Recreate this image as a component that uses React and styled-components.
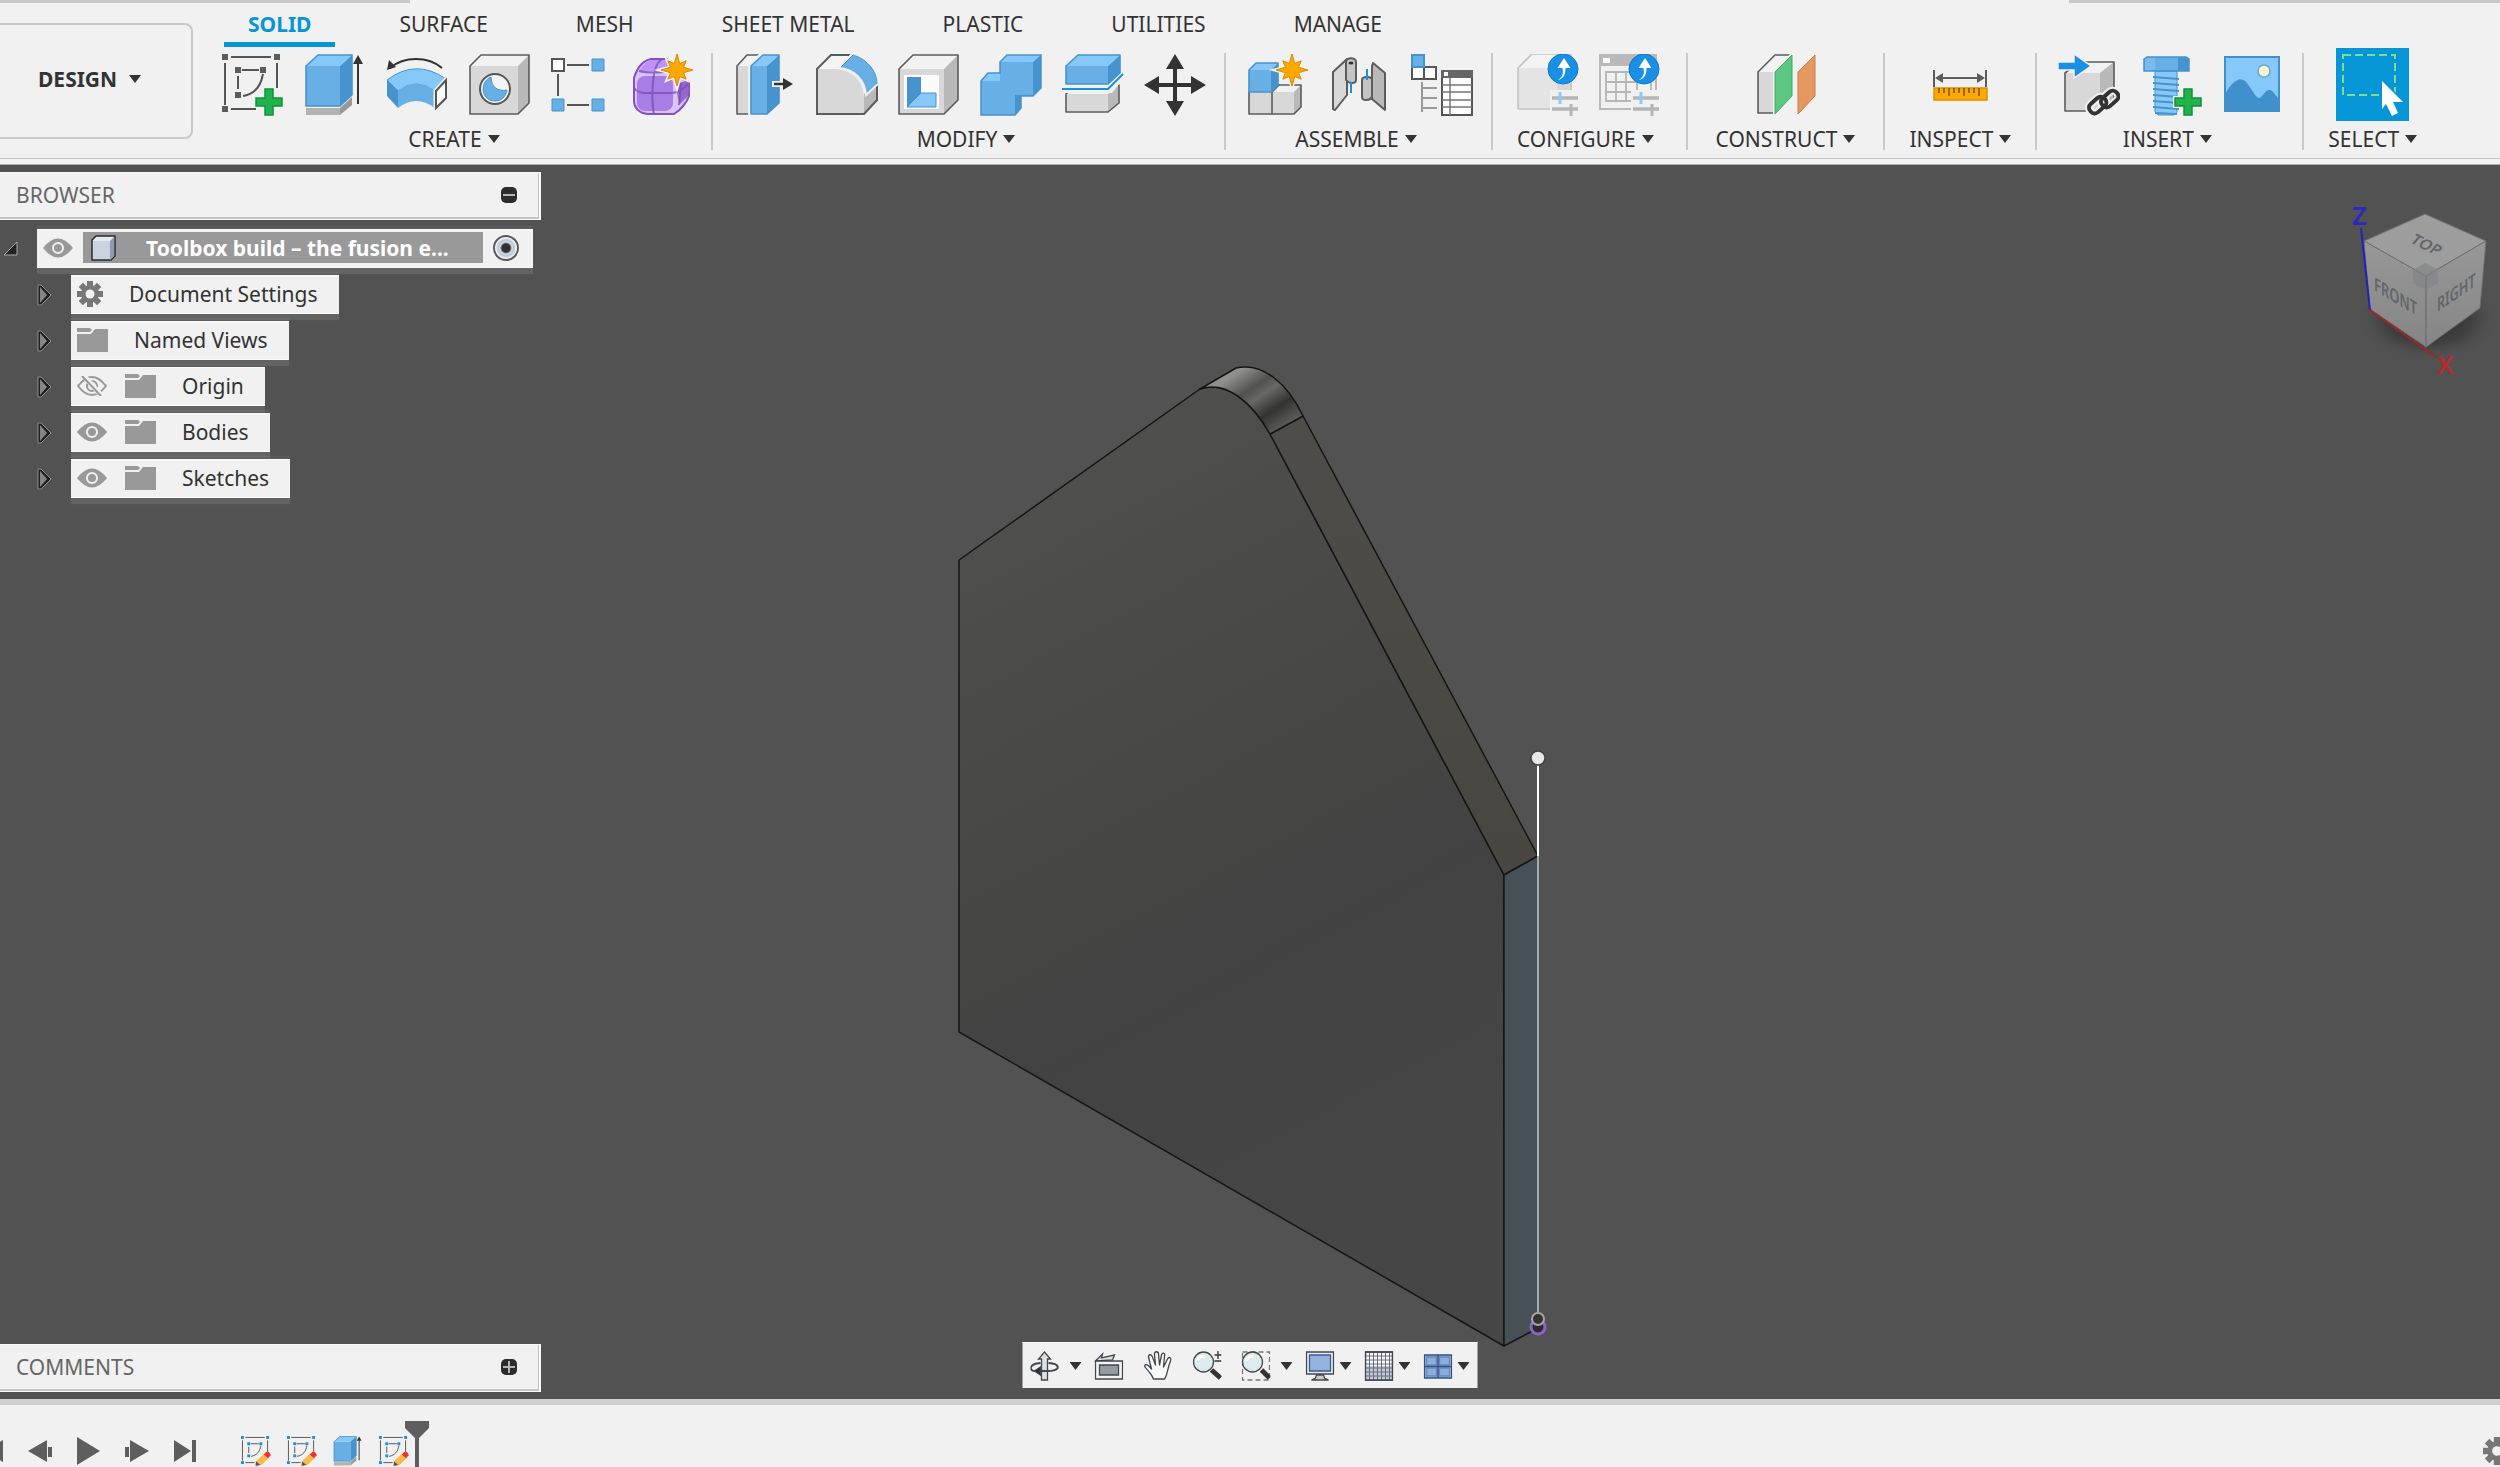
import React, { useState } from "react";
import styled, { createGlobalStyle, css } from "styled-components";

const GlobalStyle = createGlobalStyle`
  * {
    box-sizing: border-box;
  }

  body {
    margin: 0;
    overflow: hidden;
    background: #525252;
    color: #333333;
    font-family: "Noto Sans", "Open Sans", sans-serif;
    font-size: 21px;
    line-height: 28px;
  }

  button,
  select {
    margin: 0;
    padding: 0;
    border: 0;
    background: none;
    color: inherit;
    font: inherit;
    cursor: pointer;
  }

  svg {
    display: block;
    flex: none;
  }
`;

const Page = styled.div`
  display: flex;
  flex-direction: column;
  height: 100vh;
  overflow: hidden;
`;

/* ---------- header ---------- */

const Header = styled.header`
  position: relative;
  display: flex;
  background: #f1f1f1;
  border-bottom: 1px solid #c8c8c8;

  &::before,
  &::after {
    content: "";
    position: absolute;
    top: 0;
    height: 3px;
    background: #c8c8c8;
  }

  &::before {
    left: 0;
    width: 410px;
  }

  &::after {
    right: 0;
    width: 431px;
  }
`;

const HeaderEdge = styled.div`
  height: 6px;
  flex: none;
  background: #f4f4f4;
  border-bottom: 1px solid #a9b3af;
`;

const Workspace = styled.label`
  display: flex;
  align-items: center;
  gap: 12px;
  width: 200px;
  height: 116px;
  margin: 23px 29px 0 -7px;
  padding: 0 0 4px 43px;
  border: 2px solid #c8c8c8;
  border-radius: 8px;
`;

const WorkspaceSelect = styled.select`
  appearance: none;
  field-sizing: content;
  font-weight: 700;
`;

const Ribbon = styled.div`
  flex: 1;
  min-width: 0;
`;

const Tabs = styled.nav`
  display: flex;
  gap: 40px;
  height: 48px;
  padding-left: 2px;
`;

const Tab = styled.button`
  height: 47px;
  padding: 5px 24px 0;
  border-bottom: 5px solid transparent;
  white-space: nowrap;

  ${(p) =>
    p.$active &&
    css`
      color: #0696d7;
      border-color: #0696d7;
      font-weight: 700;
    `}
`;

const Groups = styled.div`
  display: flex;
`;

const groupPadding = {
  first: "0 17px 0 0",
  tight: "0 18px 0 21px",
  medium: "0 24px",
  wide: "0 28px",
};

const Group = styled.section`
  display: flex;
  flex-direction: column;
  align-items: center;
  padding: ${(p) => groupPadding[p.$pad]};
`;

const Divider = styled.div`
  width: 2px;
  height: 97px;
  margin-top: 5px;
  background: #cacaca;
`;

const Tools = styled.div`
  display: flex;
  align-items: center;
  gap: 20px;
  height: 73px;
`;

const Tool = styled.button`
  display: block;
`;

const GroupLabel = styled.button`
  display: flex;
  align-items: center;
  gap: 6px;
  height: 37px;
  padding: 0 ${(p) => (p.$shifted ? 8 : 0)}px 2px 0;
  white-space: nowrap;
`;

/* ---------- canvas ---------- */

const Canvas = styled.main`
  position: relative;
  display: flex;
  flex: 1;
  flex-direction: column;
  justify-content: space-between;
  min-height: 0;
  padding: 7px 0;
  background: #525252;
`;

const Scene = styled.svg`
  position: absolute;
  inset: 0;
  width: 100%;
  height: 100%;
`;

const ViewCube = styled.div`
  position: absolute;
  top: 15px;
  right: 0;
`;

const Side = styled.aside`
  position: relative;
  width: 541px;
`;

const PanelBar = styled.div`
  position: relative;
  display: flex;
  align-items: center;
  justify-content: space-between;
  width: 541px;
  height: 48px;
  padding: 0 22px 2px 16px;
  background: #f1f1f1;
  border: solid #fafafa;
  border-width: 1px 2px 1px 0;
  box-shadow: inset -1px -2px 0 #c4c4c4;
  color: #666666;
`;

const Tree = styled.ul`
  display: flex;
  flex-direction: column;
  gap: 7px;
  margin: 9px 0 0;
  padding: 0;
  list-style: none;
`;

const Row = styled.li`
  display: flex;
  align-items: center;
`;

const Toggle = styled.button`
  display: flex;
  justify-content: flex-end;
  width: ${(p) => (p.$root ? 18 : 52)}px;
  margin-right: 19px;
`;

const Chip = styled.div`
  display: flex;
  align-items: center;
  height: 39px;
  padding: 0 ${(p) => (p.$root ? 14 : 21)}px 2px 6px;
  background: #f1f1f1;
  border: solid #fcfcfc;
  border-width: 1px 0;
  box-shadow: 0 6px 1px rgba(255, 255, 255, 0.1), 0 -3px 1px rgba(255, 255, 255, 0.05);
  ${(p) => p.$root && "width: 496px; justify-content: space-between;"}
`;

const Eye = styled.button`
  margin-right: ${(p) => (p.$root ? 0 : 18)}px;
`;

const Name = styled.span`
  margin-left: 26px;
  white-space: nowrap;
`;

const Selected = styled.div`
  display: flex;
  align-items: center;
  width: 400px;
  height: 31px;
  padding-left: 8px;
  background: #999999;
  color: #ffffff;
  font-weight: 700;
`;

const RootName = styled.span`
  margin-left: 29px;
  white-space: nowrap;
`;

const Active = styled.input`
  appearance: none;
  width: 26px;
  height: 26px;
  margin: 0;
  border: 2px solid #55585e;
  border-radius: 50%;
  background: radial-gradient(circle, #2d2f33 0 4px, #d4dae6 6px, #bcc4d4 8px, #ffffff 11px);
`;

const NavBar = styled.div`
  position: absolute;
  bottom: 11px;
  left: 50%;
  display: flex;
  align-items: center;
  gap: 13px;
  height: 46px;
  padding: 0 8px;
  background: #f1f1f1;
  border-top: 1px solid #fcfcfc;
  transform: translateX(-50%);
`;

const NavButton = styled.button`
  display: flex;
  align-items: center;
  gap: ${(p) => (p.$wide ? 10 : 5)}px;
  padding-right: ${(p) => (p.$menu ? 0 : 7)}px;
`;

/* ---------- timeline ---------- */

const Timeline = styled.footer`
  display: flex;
  align-items: center;
  height: 68px;
  flex: none;
  padding-top: 30px;
  background: #f1f1f1;
  border-top: 6px solid #cfcfcf;
  overflow: hidden;
`;

const Playback = styled.div`
  display: flex;
  align-items: center;
  gap: 25px;
  margin-left: -22px;
`;

const Features = styled.div`
  display: flex;
  gap: 16px;
  margin-left: 45px;
`;

const Marker = styled.svg`
  align-self: flex-end;
  margin-left: -4px;
  margin-top: -12px;
`;

const SettingsButton = styled.button`
  margin: 0 -11px 0 auto;
`;

/* ---------- icon parts ---------- */

const BLUE = { front: "#68afe5", top: "#87c8fb", side: "#4793cd", line: "#4793cd" };
const GRAY = { front: "#d8d8d8", top: "#f2f2f2", side: "#b9b9b9", line: "#5c5c5c" };
const GHOST = { front: "#e4e4e4", top: "#f3f3f3", side: "#d8d8d8", line: "#c3c3c3" };

const Icon = ({ size = 62, box = 62, children }) => (
  <svg width={size} height={size} viewBox={`0 0 ${box} ${box}`} fill="none" aria-hidden="true">
    {children}
  </svg>
);

const Caret = () => (
  <svg width="12" height="8" viewBox="0 0 12 8" aria-hidden="true">
    <path d="M0 0h12L6 8z" fill="#333333" />
  </svg>
);

// box seen from the front, its top and right sides running back by (d, e)
const Block = ({ x, y, w, h, d, e, tone }) => (
  <g stroke={tone.line} strokeWidth="1.6" strokeLinejoin="round">
    <path d={`M${x} ${y}h${w}v${h}h${-w}z`} fill={tone.front} stroke="none" />
    <path d={`M${x} ${y}l${d} ${-e}h${w}l${-d} ${e}z`} fill={tone.top} stroke="none" />
    <path d={`M${x + w} ${y}l${d} ${-e}v${h}l${-d} ${e}z`} fill={tone.side} stroke="none" />
    <path d={`M${x} ${y}l${d} ${-e}h${w}v${h}l${-d} ${e}h${-w}z`} />
  </g>
);

const starPoints = (cx, cy) =>
  Array.from({ length: 16 }, (_, i) => {
    const r = i % 2 ? 7 : i % 4 ? 13 : 16;
    const a = (i * Math.PI) / 8 - Math.PI / 2;
    return `${(cx + r * Math.cos(a)).toFixed(1)},${(cy + r * Math.sin(a)).toFixed(1)}`;
  }).join(" ");

const Star = ({ x, y }) => (
  <>
    <polygon points={starPoints(x, y)} stroke="#f1f1f1" strokeWidth="4" />
    <polygon points={starPoints(x, y)} fill="#ffa800" stroke="#d98a00" strokeWidth="1" />
  </>
);

const Plus = ({ x, y }) => (
  <>
    <path d={`M${x - 4} ${y - 13}h8v9h9v8h-9v9h-8v-9h-9v-8h9z`} stroke="#f1f1f1" strokeWidth="4" />
    <path
      d={`M${x - 4} ${y - 13}h8v9h9v8h-9v9h-8v-9h-9v-8h9z`}
      fill="#22b24c"
      stroke="#12913a"
      strokeWidth="1.5"
    />
  </>
);

const Upgrade = ({ x, y }) => (
  <>
    <circle cx={x} cy={y} r="15" fill="#1a8fe6" stroke="#0b79cc" />
    <path
      d={`M${x - 5} ${y + 11}c6-4 5-8 4.5-12h-5l6.5-10 6.5 10h-5c0 5-1 10-7 12z`}
      fill="#ffffff"
    />
  </>
);

const Sliders = ({ x }) => (
  <>
    <path d={`M${x - 2} 36h30v26h-30z`} fill="#f1f1f1" />
    <path d={`M${x} 44h26M${x} 55h26`} stroke="#b5b5b5" strokeWidth="3.5" />
    <path d={`M${x + 8} 38v12`} stroke="#8ccbf7" strokeWidth="3" />
    <path d={`M${x + 19} 50v12`} stroke="#b5b5b5" strokeWidth="3" />
  </>
);

const SketchLines = ({ dot }) => (
  <>
    <path d="M9 3h40M3 9v42M55 9v25M9 55h25" stroke="#555" strokeWidth="2" />
    <path d="M20 16h17M16 22v13M41 20C39 32 33 40 21 42" stroke="#555" strokeWidth="2" />
    {[
      [0, 0],
      [52, 0],
      [0, 52],
      [13, 13],
      [38, 13],
      [13, 38],
    ].map(([x, y]) => (
      <rect key={`${x}-${y}`} x={x} y={y} width="6" height="6" fill={dot} />
    ))}
  </>
);

/* ---------- ribbon icons ---------- */

const SketchIcon = () => (
  <Icon>
    <SketchLines dot="#5c5c5c" />
    <Plus x={47} y={48} />
  </Icon>
);

const ExtrudeIcon = ({ size }) => (
  <Icon size={size}>
    <path d="M2 54h34v7H2z" fill="#b3b3b3" />
    <path d="M36 54l12-11v8L36 61z" fill="#999" />
    <Block x={2} y={12} w={34} h={40} d={12} e={11} tone={BLUE} />
    <path d="M54 8v42" stroke="#333" strokeWidth="2" />
    <path d="M54 1l5 9H49z" fill="#333" />
  </Icon>
);

const BendIcon = () => (
  <Icon>
    <path d="M56 14C42 2 18 2 4 14" stroke="#333" strokeWidth="2" />
    <path d="M1 16L3 6l7 7z" fill="#333" />
    <path d="M1 26Q30 4 60 25L49 37Q30 23 12 37z" fill="#87c8fb" stroke="#4793cd" />
    <path d="M12 37Q30 23 49 37v17Q30 40 12 54z" fill="#68afe5" />
    <path d="M1 26l11 11v17L1 42z" fill="#4793cd" />
    <path d="M50 37l10-11v18L50 54z" fill="#fafafa" stroke="#f1f1f1" strokeWidth="5" />
    <path d="M50 37l10-11v18L50 54z" fill="#fafafa" stroke="#555" strokeWidth="2" />
  </Icon>
);

const HoleIcon = () => (
  <Icon>
    <Block x={2} y={12} w={48} h={48} d={11} e={11} tone={GRAY} />
    <circle cx="27" cy="35" r="15" fill="#f4f4f4" stroke="#555" strokeWidth="2" />
    <path d="M23 23C23 32 29 38 39 36C38 43 33 47 27 47C13 47 11 28 23 23z" fill="#68afe5" stroke="#4793cd" />
  </Icon>
);

const PatternIcon = () => (
  <Icon>
    <path d="M17 11h22M17 51h22M8 20v22" stroke="#555" strokeWidth="2" />
    <path d="M2 5h12v12H2z" fill="#fff" stroke="#555" strokeWidth="2" />
    <path d="M42 5h12v12H42zM42 45h12v12H42zM2 45h12v12H2z" fill="#68afe5" stroke="#4793cd" />
  </Icon>
);

const FormIcon = () => (
  <Icon>
    <path
      d="M2 24C5 14 10 7 19 5h16l22 24v13c-2 6-8 14-15 18H16C7 59 2 54 2 46z"
      fill="#dcc2fb"
      stroke="#8250c0"
      strokeWidth="2"
    />
    <path d="M7 18C10 11 15 7 20 6h14l7 8c-2 2-5 3-8 3H9z" fill="#bd92fa" />
    <rect x="5" y="22" width="36" height="35" rx="8" fill="#a87de6" />
    <path d="M45 30l11-4c1 5 1 11 0 16l-8 8c-3-5-3-14-3-20z" fill="#9468cc" />
    <path
      d="M2 34c3 4 6 5 11 5h26c7 0 12-4 17-9M22 60c-2-8-2-24-1-32 1-9 2-18 9-23M7 17c8 2 22 2 30 0M49 29c-1 7-1 14-2 22"
      stroke="#7a4fb5"
      strokeOpacity="0.8"
      strokeWidth="2"
    />
    <Star x={45} y={16} />
  </Icon>
);

const PressPullIcon = () => (
  <Icon>
    <Block x={3} y={12} w={12} h={48} d={10} e={11} tone={GRAY} />
    <path d="M14 11L25 0h4v62H14z" fill="#f1f1f1" />
    <Block x={17} y={12} w={16} h={48} d={12} e={11} tone={BLUE} />
    <path d="M38 27h12v6H38z" fill="#f1f1f1" />
    <path d="M40 30h13" stroke="#333" strokeWidth="2.5" />
    <path d="M49 24l10 6-10 6z" fill="#333" />
  </Icon>
);

const FilletIcon = () => (
  <Icon>
    <path d="M1 15L15 1h20L24 15z" fill="#f4f4f4" />
    <path d="M48 40l13-10v16L48 60z" fill="#b9b9b9" />
    <path d="M1 15h20c17 2 27 14 27 30v15H1z" fill="#d8d8d8" />
    <path d="M35 1H15L1 15v45h47l13-14V29" stroke="#5c5c5c" strokeWidth="2" />
    <path d="M23 14L36 0c16 4 26 16 26 30L50 41C49 26 38 15 23 14z" fill="#68afe5" stroke="#f1f1f1" strokeWidth="2" />
    <path d="M25 13L37 1c14 4 24 16 24 29" stroke="#4793cd" />
  </Icon>
);

const ShellIcon = () => (
  <Icon>
    <Block x={1} y={15} w={45} h={45} d={14} e={14} tone={GRAY} />
    <path d="M6 21h35v34H6z" fill="#fbfbfb" />
    <path d="M9 23h14v16L9 53z" fill="#4793cd" />
    <path d="M23 39h15v14H9z" fill="#87c8fb" stroke="#4793cd" />
  </Icon>
);

const CombineIcon = () => (
  <Icon>
    <path d="M1 27l7-8h12V8l7-7h34v33l-8 8H41v12l-6 7H1z" fill="#4793cd" />
    <path d="M1 27h19V8h33v33H35v20H1z" fill="#68afe5" />
    <path d="M20 8l7-7h34l-8 7zM1 27l7-8h12v8z" fill="#87c8fb" />
    <path d="M1 27l7-8h12V8l7-7h34v33l-8 8H41v12l-6 7H1z" stroke="#4793cd" strokeWidth="1.5" />
  </Icon>
);

const SplitIcon = () => (
  <Icon>
    <Block x={4} y={40} w={42} h={18} d={11} e={9} tone={GRAY} />
    <path d="M0 28h48l14-14v10L50 39H0z" fill="#f1f1f1" />
    <Block x={4} y={12} w={42} h={18} d={12} e={11} tone={BLUE} />
    <path d="M0 35h46l15-15" stroke="#1a8fe6" strokeWidth="2" />
  </Icon>
);

const MoveIcon = () => (
  <Icon>
    <path d="M31 10v42M10 31h42" stroke="#333" strokeWidth="4" />
    <path d="M31 0l9 15H22zM31 62l9-15H22zM0 31l15-9v18zM62 31l-15-9v18z" fill="#333" />
  </Icon>
);

const ComponentIcon = () => (
  <Icon>
    <Block x={2} y={38} w={23} h={22} d={7} e={7} tone={GRAY} />
    <Block x={25} y={38} w={22} h={22} d={7} e={7} tone={GRAY} />
    <Block x={2} y={16} w={22} h={22} d={7} e={7} tone={BLUE} />
    <Star x={45} y={16} />
  </Icon>
);

const JointIcon = () => (
  <Icon>
    <g stroke="#5c5c5c" strokeWidth="2" strokeLinejoin="round">
      <path d="M4 18L18 5v36L6 56l-2-1z" fill="#d8d8d8" />
      <path d="M17 8c0-5 10-5 10 0v18c0 4-7 4-10 0z" fill="#c4c4c4" />
      <path d="M43 12l1-3 12 10v37L43 45z" fill="#b9b9b9" />
      <path d="M33 26c0-4 10-4 10 0v17c-2 4-10 4-10 0z" fill="#c4c4c4" />
    </g>
    <ellipse cx="22" cy="9" rx="2.5" ry="1.5" fill="#333" />
    <path d="M22 28v11M38 15v11" stroke="#1a8fe6" strokeWidth="2" />
  </Icon>
);

const BomIcon = () => (
  <Icon>
    <path d="M1 13h12v12H1zM13 13h12v12H13z" fill="#fff" stroke="#555" strokeWidth="2" />
    <path d="M1 1h12v12H1z" fill="#68afe5" stroke="#4793cd" strokeWidth="2" />
    <path d="M11 28v30M11 34h15M11 44h15M11 54h15" stroke="#999" strokeWidth="2" />
    <path d="M31 17h30v44H31z" fill="#fff" stroke="#555" strokeWidth="2" />
    <path d="M30 16h32v8H30z" fill="#666" />
    <path d="M33 18h4v4h-4z" fill="#fff" />
    <path d="M39 24v37M31 31h30M31 38h30M31 46h30M31 53h30" stroke="#777" strokeWidth="1.5" />
  </Icon>
);

const ConfigureIcon = () => (
  <Icon>
    <Block x={1} y={14} w={39} h={41} d={14} e={14} tone={GHOST} />
    <Sliders x={35} />
    <Upgrade x={46} y={15} />
  </Icon>
);

const ConfigTableIcon = () => (
  <Icon>
    <path d="M1 1h56v54H1z" fill="#f1f1f1" stroke="#b9b9b9" strokeWidth="2" />
    <path d="M0 0h58v12H0z" fill="#b9b9b9" />
    <path d="M4 4h7v5H4z" fill="#fff" />
    <path d="M7 18h45v29H7zM7 28h45M7 38h45M17 18v29M27 18v29M38 18v29" stroke="#b5b5b5" strokeWidth="1.8" />
    <Sliders x={34} />
    <Upgrade x={45} y={15} />
  </Icon>
);

const PlaneIcon = () => (
  <Icon>
    <Block x={3} y={18} w={16} h={41} d={17} e={17} tone={GRAY} />
    <path d="M20 18L37 1v41L20 60z" fill="#5bc780" stroke="#f1f1f1" strokeWidth="4" />
    <path d="M20 18L37 1v41L20 60z" fill="#5bc780" stroke="#3fae67" />
    <path d="M43 18L60 1v41L43 60z" fill="#e59862" stroke="#cf7a3e" />
  </Icon>
);

const MeasureIcon = () => (
  <Icon>
    <path d="M5 16v17M57 16v17M10 24h42" stroke="#5c5c5c" strokeWidth="2" />
    <path d="M6 24l8-5v10zM56 24l-8-5v10z" fill="#5c5c5c" />
    <path d="M5 34h53v12H5z" fill="#ffa800" stroke="#e08f00" strokeWidth="1.5" />
    <path d="M10 34v5M15 34v5M20 34v8M25 34v5M30 34v5M35 34v8M40 34v5M45 34v5M50 34v8" stroke="#7a5200" strokeWidth="1.5" />
  </Icon>
);

const DeriveIcon = () => (
  <Icon>
    <Block x={7} y={19} w={35} h={38} d={14} e={11} tone={GRAY} />
    <path d="M0 8h16V0l17 12-17 12v-8H0z" fill="#1a8fe6" stroke="#f1f1f1" strokeWidth="1.5" />
    {["#f1f1f1", "#333333"].map((stroke) => (
      <g key={stroke} stroke={stroke} strokeWidth={stroke === "#333333" ? 4 : 8}>
        <rect x="46" y="35" width="11" height="19" rx="5" transform="rotate(48 51 45)" />
        <rect x="34" y="41" width="11" height="19" rx="5" transform="rotate(48 39 51)" />
      </g>
    ))}
  </Icon>
);

const BoltIcon = () => (
  <Icon>
    <path d="M15 17h22v41l-3 3H18l-3-3z" fill="#87c8fb" stroke="#4793cd" />
    <path
      d="M13 23l26 2M13 29l26 2M13 35l26 2M13 41l26 2M13 47l26 2M13 53l26 2M15 59l22 1"
      stroke="#4793cd"
      strokeWidth="2"
    />
    <path d="M4 5l3-2h39l3 2v12H4z" fill="#68afe5" stroke="#4793cd" strokeWidth="1.5" />
    <path d="M38 3h8l3 2v12H38z" fill="#4793cd" />
    <path d="M5 5l3-1h7v12H5z" fill="#87c8fb" fillOpacity="0.5" />
    <Plus x={48} y={48} />
  </Icon>
);

const ImageIcon = () => (
  <Icon>
    <path d="M3 3h54v54H3z" fill="#87c8fb" />
    <path d="M3 40C10 28 18 20 25 29c6 8 9 15 12 15s6-8 10-8 6 5 10 9v12H3z" fill="#4090cc" />
    <path d="M3 3h54v54H3z" stroke="#4090cc" strokeWidth="2" />
    <circle cx="42" cy="17" r="6" fill="#fff8cc" stroke="#6aa5d4" strokeWidth="1.5" />
  </Icon>
);

const SelectIcon = () => (
  <Icon size={73} box={73}>
    <path d="M0 0h73v73H0z" fill="#0696d7" />
    <path d="M7 7h52v40H7z" stroke="#7be08a" strokeWidth="2" strokeDasharray="8 4" />
    <path d="M46 33l21 21H57l5 11-6 3-6-12-4 5z" fill="#fff" stroke="#0696d7" strokeWidth="3" />
    <path d="M46 33l21 21H57l5 11-6 3-6-12-4 5z" fill="#fff" />
  </Icon>
);

/* ---------- tree icons ---------- */

const EyeIcon = ({ off }) => (
  <svg width="30" height="20" viewBox="0 0 30 20" fill="none" aria-hidden="true">
    {off ? (
      <>
        <path d="M1 10Q15-8 29 10Q15 28 1 10z" stroke="#999" strokeWidth="2" />
        <circle cx="15" cy="10" r="5" stroke="#999" strokeWidth="2" />
        <path d="M7 0l18 20" stroke="#f1f1f1" strokeWidth="5" />
        <path d="M5 0l19 20" stroke="#999" strokeWidth="2" />
      </>
    ) : (
      <>
        <path d="M0 10Q15-9 30 10Q15 29 0 10z" fill="#999" />
        <circle cx="15" cy="10" r="5" fill="#999" stroke="#f1f1f1" strokeWidth="2" />
      </>
    )}
  </svg>
);

const FolderIcon = () => (
  <svg width="31" height="26" viewBox="0 0 31 26" aria-hidden="true">
    <path d="M0 1h13l2 2-2 2H0z" fill="#999" />
    <path d="M0 7h14l4-5h13v23H0z" fill="#999" />
  </svg>
);

const GearIcon = ({ size = 26 }) => (
  <svg width={size} height={size} viewBox="-13 -13 26 26" aria-hidden="true">
    {[0, 45, 90, 135].map((a) => (
      <rect key={a} x="-3" y="-13" width="6" height="26" fill="#777" transform={`rotate(${a})`} />
    ))}
    <circle r="9" fill="#777" />
    <circle r="4.5" fill="#f1f1f1" />
  </svg>
);

const BodyIcon = () => (
  <svg width="26" height="26" viewBox="0 0 26 26" aria-hidden="true">
    <path d="M1 5l4-4h19v20l-4 4H1z" fill="#e4e8f0" stroke="#26282c" strokeWidth="1.5" strokeLinejoin="round" />
    <path d="M19 6l4-4v19l-4 4z" fill="#8f9bb0" />
    <path d="M2 6h17v18H2z" fill="#ccd3e0" />
  </svg>
);

const ArrowIcon = ({ open }) =>
  open ? (
    <svg width="15" height="15" viewBox="0 0 15 15" aria-hidden="true">
      <path d="M1 14L14 1v13z" fill="#222" stroke="#aaa" />
    </svg>
  ) : (
    <svg width="15" height="22" viewBox="0 0 15 22" aria-hidden="true">
      <path d="M1 1h3l10 10L4 21H1z" fill="#1f1f1f" stroke="#8c8c8c" />
      <path d="M3 3v16l7-8z" fill="#858585" />
    </svg>
  );

const RoundIcon = ({ plus }) => (
  <svg width="16" height="16" viewBox="0 0 16 16" aria-hidden="true">
    <rect width="16" height="16" rx="5" fill="#2c2c2c" />
    <path d={plus ? "M2 8h12M8 2v12" : "M2 8h12"} stroke="#b5b5b5" strokeWidth="2" />
  </svg>
);

/* ---------- navigation icons ---------- */

const NavIcon = ({ children }) => (
  <svg width="29" height="30" viewBox="0 0 29 30" fill="none" stroke="#42464d" strokeWidth="1.3" aria-hidden="true">
    {children}
  </svg>
);

const OrbitIcon = () => (
  <NavIcon>
    <path d="M10 12C-2 13-2 20 5 20M18 12c12 1 12 7 2 8" strokeWidth="2" />
    <path d="M11 29V8H8l6-7 6 7h-3v21z" fill="#dcdfe6" />
    <path d="M4 20l6-4v8z" fill="#222" />
    <path d="M8 20h12" strokeWidth="2" />
  </NavIcon>
);

const LookIcon = () => (
  <NavIcon>
    <path d="M1 10L8 3l-1 4 13-3-2 5z" fill="#dfe2e6" />
    <path d="M1 10h27v18H1z" fill="#f4f4f4" />
    <path d="M5 14h19v10H5z" fill="#969ba2" />
  </NavIcon>
);

const HandIcon = () => (
  <NavIcon>
    <path
      d="M10 28C8 22 3 19 1 15c1-3 4-1 7 3L5 6c0-3 3-3 4 0l3 8-1-11c0-3 4-3 4 0l1 11 2-10c1-3 4-2 3 1l-1 11 4-8c2-3 4-1 3 2-3 7-3 14-6 18z"
      fill="#f8f8f8"
      strokeLinejoin="round"
    />
  </NavIcon>
);

const ZoomIcon = () => (
  <NavIcon>
    <path d="M19 19l9 8" strokeWidth="5" stroke="#333" />
    <circle cx="11" cy="11" r="10" fill="#dcecec" />
    <path d="M5 10c1-4 3-5 7-5" stroke="#fff" strokeWidth="3" />
    <path d="M22 4h7M25.5 0v8M22 10h7" stroke="#333" />
  </NavIcon>
);

const FitIcon = () => (
  <NavIcon>
    <path d="M1 1h27v28H1z" strokeDasharray="5 3" stroke="#777" />
    <path d="M20 19l8 8" strokeWidth="5" stroke="#333" />
    <circle cx="11" cy="11" r="10" fill="#dcecec" />
    <path d="M5 10c1-4 3-5 7-5" stroke="#fff" strokeWidth="3" />
  </NavIcon>
);

const DisplayIcon = () => (
  <NavIcon>
    <path d="M11 24h7l1 3 4 2H6l4-2z" fill="#c8ccd2" />
    <path d="M1 1h27v22H1z" fill="#e9ebee" />
    <path d="M4 4h21v16H4z" fill="#93b4de" stroke="#3d5a8c" />
  </NavIcon>
);

const GridIcon = () => (
  <NavIcon>
    <path d="M1 1h27v28H1z" fill="#fafafc" />
    <path d="M1 15h27v14H1z" fill="#c3c8d6" stroke="none" />
    <path
      d="M5 1v28M9 1v28M13 1v28M17 1v28M21 1v28M25 1v28M1 5h27M1 9h27M1 13h27M1 17h27M1 21h27M1 25h27"
      stroke="#6a6f7c"
      strokeWidth="1"
    />
    <path d="M1 1h27v28H1z" />
  </NavIcon>
);

const ViewportsIcon = () => (
  <NavIcon>
    <path d="M1 4h27v23H1z" fill="#a9c2e4" stroke="#33507f" />
    <path d="M3 6h10v8H3zM16 6h10v8H16zM3 17h10v8H3zM16 17h10v8H16z" fill="#8caedb" stroke="#6488bd" />
    <path d="M14.5 4v23M1 15.5h27" stroke="#33507f" strokeWidth="1.5" />
  </NavIcon>
);

/* ---------- timeline icons ---------- */

const PlayIcon = ({ w, d }) => (
  <svg width={w} height="28" viewBox={`0 0 ${w} 28`} aria-hidden="true">
    <path d={d} fill="#5e5e5e" />
  </svg>
);

const TimelineSketch = () => (
  <Icon size={30}>
    <SketchLines dot="#1a8fe6" />
    <path d="M52 30l10 10-22 22H26l4-14z" fill="#f1f1f1" />
    <path d="M47 38l9 8-15 14-9-8z" fill="#fdbb45" stroke="#e09a20" />
    <path d="M47 38l5-5c5-2 10 3 9 7l-5 6z" fill="#f23030" />
    <path d="M31 52l9 8-10 2z" fill="#555" />
  </Icon>
);

/* ---------- data ---------- */

const TABS = ["SOLID", "SURFACE", "MESH", "SHEET METAL", "PLASTIC", "UTILITIES", "MANAGE"];

const GROUPS = [
  {
    label: "CREATE",
    pad: "first",
    tools: [
      ["Create Sketch", SketchIcon],
      ["Extrude", ExtrudeIcon],
      ["Revolve", BendIcon],
      ["Hole", HoleIcon],
      ["Pattern", PatternIcon],
      ["Create Form", FormIcon],
    ],
  },
  {
    label: "MODIFY",
    pad: "tight",
    tools: [
      ["Press Pull", PressPullIcon],
      ["Fillet", FilletIcon],
      ["Shell", ShellIcon],
      ["Combine", CombineIcon],
      ["Split Body", SplitIcon],
      ["Move", MoveIcon],
    ],
  },
  {
    label: "ASSEMBLE",
    pad: "tight",
    tools: [
      ["New Component", ComponentIcon],
      ["Joint", JointIcon],
      ["Bill of Materials", BomIcon],
    ],
  },
  {
    label: "CONFIGURE",
    pad: "medium",
    tools: [
      ["Configure", ConfigureIcon],
      ["Configuration Table", ConfigTableIcon],
    ],
  },
  { label: "CONSTRUCT", pad: "wide", tools: [["Offset Plane", PlaneIcon]] },
  { label: "INSPECT", pad: "medium", tools: [["Measure", MeasureIcon]] },
  {
    label: "INSERT",
    pad: "tight",
    tools: [
      ["Insert Derive", DeriveIcon],
      ["Insert Fastener", BoltIcon],
      ["Canvas", ImageIcon],
    ],
  },
  { label: "SELECT", pad: "medium", tools: [["Select", SelectIcon]] },
];

const NODES = [
  { name: "Document Settings", icon: GearIcon },
  { name: "Named Views", icon: FolderIcon },
  { name: "Origin", icon: FolderIcon, eye: "off" },
  { name: "Bodies", icon: FolderIcon, eye: "on" },
  { name: "Sketches", icon: FolderIcon, eye: "on" },
];

const NAV = [
  { name: "Orbit", icon: OrbitIcon, menu: true, wide: true },
  { name: "Look At", icon: LookIcon },
  { name: "Pan", icon: HandIcon },
  { name: "Zoom", icon: ZoomIcon },
  { name: "Fit", icon: FitIcon, menu: true, wide: true },
  { name: "Display Settings", icon: DisplayIcon, menu: true },
  { name: "Grid and Snaps", icon: GridIcon, menu: true },
  { name: "Viewports", icon: ViewportsIcon, menu: true },
];

const PLAYBACK = [
  { name: "Go to Start", w: 25, d: "M5 14l20-11v22zM0 3h4v22H0z" },
  { name: "Step Back", w: 24, d: "M0 14L19 3v22zM20 10h4v10h-4z" },
  { name: "Play", w: 23, d: "M0 0l23 14L0 28z" },
  { name: "Step Forward", w: 24, d: "M5 3l19 11L5 25zM0 10h4v10H0z" },
  { name: "Go to End", w: 22, d: "M0 3l17 11L0 25zM18 3h4v22h-4z" },
];

const FEATURES = [
  ["Sketch1", TimelineSketch],
  ["Sketch2", TimelineSketch],
  ["Extrude1", ExtrudeIcon],
  ["Sketch3", TimelineSketch],
];

/* ---------- parts of the page ---------- */

const Model = () => (
  <Scene viewBox="0 165 2500 1234" aria-hidden="true">
    <defs>
      <linearGradient id="front" x1="0" y1="0" x2="0.3" y2="1">
        <stop offset="0" stopColor="#525250" />
        <stop offset="0.35" stopColor="#4a4a48" />
        <stop offset="0.7" stopColor="#424242" />
        <stop offset="1" stopColor="#464646" />
      </linearGradient>
      <linearGradient id="slope" x1="0" y1="0" x2="0" y2="1">
        <stop offset="0" stopColor="#4f4d49" />
        <stop offset="1" stopColor="#484640" />
      </linearGradient>
      <linearGradient id="round" gradientUnits="userSpaceOnUse" x1="1212" y1="372" x2="1264" y2="450">
        <stop offset="0" stopColor="#8a8a88" />
        <stop offset="0.15" stopColor="#90908e" />
        <stop offset="0.38" stopColor="#51514f" />
        <stop offset="0.5" stopColor="#686866" />
        <stop offset="0.7" stopColor="#333331" />
        <stop offset="1" stopColor="#6c6c6a" />
      </linearGradient>
    </defs>
    <g stroke="#151515" strokeWidth="1.5" strokeLinejoin="round">
      <path d="M959 560L1200 389C1226 380 1252 402 1270 434L1504 875V1346L959 1032z" fill="url(#front)" />
      <path d="M1270 434l33-18L1538 856l-34 19z" fill="url(#slope)" />
      <path d="M1200 389l36-21c27-6 52 16 67 48l-33 18C1252 402 1226 380 1200 389z" fill="url(#round)" />
      <path d="M1504 875l34-19v472l-34 18z" fill="#465056" />
    </g>
    <path d="M1538 758v98" stroke="#fff" strokeWidth="2" />
    <path d="M1538 856v462" stroke="#a3adaf" strokeWidth="2" />
    <circle cx="1538" cy="758" r="7" fill="#e8e8e8" stroke="#444" strokeWidth="1.5" />
    <circle cx="1538" cy="1327" r="7" fill="#2a2a2a" stroke="#8c64c8" strokeWidth="3" />
    <circle cx="1538" cy="1319" r="6" fill="#333" stroke="#a5a5a5" strokeWidth="2" />
  </Scene>
);

const Cube = () => (
  <ViewCube>
    <svg width="200" height="220" viewBox="0 0 200 220" aria-label="View cube">
      <defs>
        <radialGradient id="shade">
          <stop offset="0" stopColor="#2c2c2c" />
          <stop offset="0.6" stopColor="#404040" />
          <stop offset="1" stopColor="#525252" stopOpacity="0" />
        </radialGradient>
        <linearGradient id="face" x1="0" y1="0" x2="0" y2="1">
          <stop offset="0" stopColor="#989898" />
          <stop offset="1" stopColor="#858585" />
        </linearGradient>
      </defs>
      <ellipse cx="128" cy="138" rx="72" ry="44" fill="url(#shade)" />
      <g stroke="#6f6f6f" strokeWidth="1">
        <path d="M64 61l61-27 61 27-60 35z" fill="#9d9d9d" />
        <path d="M64 61l62 35v71L70 129z" fill="url(#face)" />
        <path d="M186 61l-60 35v71l54-39z" fill="url(#face)" />
      </g>
      <path d="M125 83l13 7v13l-12 7-13-7V90z" fill="#828589" opacity="0.7" />
      <path d="M126 96v71" stroke="#777" />
      <path d="M61 48l9 82" stroke="#2222bb" strokeWidth="2" />
      <path d="M70 130l66 47" stroke="#9e2626" strokeWidth="2" />
      <g fontFamily="Noto Sans, sans-serif">
        <g fill="#62656a" fontSize="17" fontWeight="600">
          <text transform="matrix(.84 .42 -.6 .7 109 62)">TOP</text>
          <text transform="matrix(.76 .46 0 1.1 74 110)">FRONT</text>
          <text transform="matrix(.74 -.5 0 1.1 137 132)">RIGHT</text>
        </g>
        <text x="52" y="45" fill="#2a2abf" fontSize="26" fontWeight="600">
          Z
        </text>
        <text x="137" y="194" fill="#b82a2a" fontSize="26" fontWeight="600">
          X
        </text>
      </g>
    </svg>
  </ViewCube>
);

const Browser = () => (
  <Side>
    <PanelBar>
      <span>BROWSER</span>
      <button aria-label="Collapse browser">
        <RoundIcon />
      </button>
    </PanelBar>
    <Tree>
      <Row>
        <Toggle $root aria-label="Collapse component">
          <ArrowIcon open />
        </Toggle>
        <Chip $root>
          <Eye $root aria-label="Hide component">
            <EyeIcon />
          </Eye>
          <Selected>
            <BodyIcon />
            <RootName id="root-name">Toolbox build – the fusion e...</RootName>
          </Selected>
          <Active type="radio" name="active" defaultChecked aria-labelledby="root-name" />
        </Chip>
      </Row>
      {NODES.map(({ name, icon: NodeIcon, eye }) => (
        <Row key={name}>
          <Toggle aria-label={`Expand ${name}`}>
            <ArrowIcon />
          </Toggle>
          <Chip>
            {eye && (
              <Eye aria-label={`Visibility of ${name}`}>
                <EyeIcon off={eye === "off"} />
              </Eye>
            )}
            <NodeIcon />
            <Name>{name}</Name>
          </Chip>
        </Row>
      ))}
    </Tree>
  </Side>
);

const App = () => {
  const [tab, setTab] = useState("SOLID");

  return (
    <Page>
      <GlobalStyle />
      <Header>
        <Workspace>
          <WorkspaceSelect aria-label="Workspace">
            <option>DESIGN</option>
          </WorkspaceSelect>
          <Caret />
        </Workspace>
        <Ribbon>
          <Tabs>
            {TABS.map((name) => (
              <Tab key={name} $active={name === tab} onClick={() => setTab(name)}>
                {name}
              </Tab>
            ))}
          </Tabs>
          <Groups>
            {GROUPS.map(({ label, tools, pad }, i) => (
              <React.Fragment key={label}>
                {i > 0 && <Divider />}
                <Group $pad={pad}>
                  <Tools>
                    {tools.map(([name, ToolIcon]) => (
                      <Tool key={name} aria-label={name}>
                        <ToolIcon />
                      </Tool>
                    ))}
                  </Tools>
                  <GroupLabel $shifted={tools.length > 1}>
                    {label}
                    <Caret />
                  </GroupLabel>
                </Group>
              </React.Fragment>
            ))}
          </Groups>
        </Ribbon>
      </Header>
      <HeaderEdge />

      <Canvas>
        <Model />
        <Cube />
        <Browser />
        <PanelBar>
          <span>COMMENTS</span>
          <button aria-label="Expand comments">
            <RoundIcon plus />
          </button>
        </PanelBar>
        <NavBar>
          {NAV.map(({ name, icon: NavGlyph, menu, wide }) => (
            <NavButton key={name} $menu={menu} $wide={wide} aria-label={name}>
              <NavGlyph />
              {menu && <Caret />}
            </NavButton>
          ))}
        </NavBar>
      </Canvas>

      <Timeline>
        <Playback>
          {PLAYBACK.map(({ name, w, d }) => (
            <button key={name} aria-label={name}>
              <PlayIcon w={w} d={d} />
            </button>
          ))}
        </Playback>
        <Features>
          {FEATURES.map(([name, FeatureIcon]) => (
            <button key={name} aria-label={name}>
              <FeatureIcon size={30} />
            </button>
          ))}
        </Features>
        <Marker width="24" height="46" viewBox="0 0 24 46" aria-hidden="true">
          <path d="M0 0h24v7L14 17v29h-4V17L0 7z" fill="#5e5e5e" />
        </Marker>
        <SettingsButton aria-label="Timeline settings">
          <GearIcon size={28} />
        </SettingsButton>
      </Timeline>
    </Page>
  );
};

export default App;
